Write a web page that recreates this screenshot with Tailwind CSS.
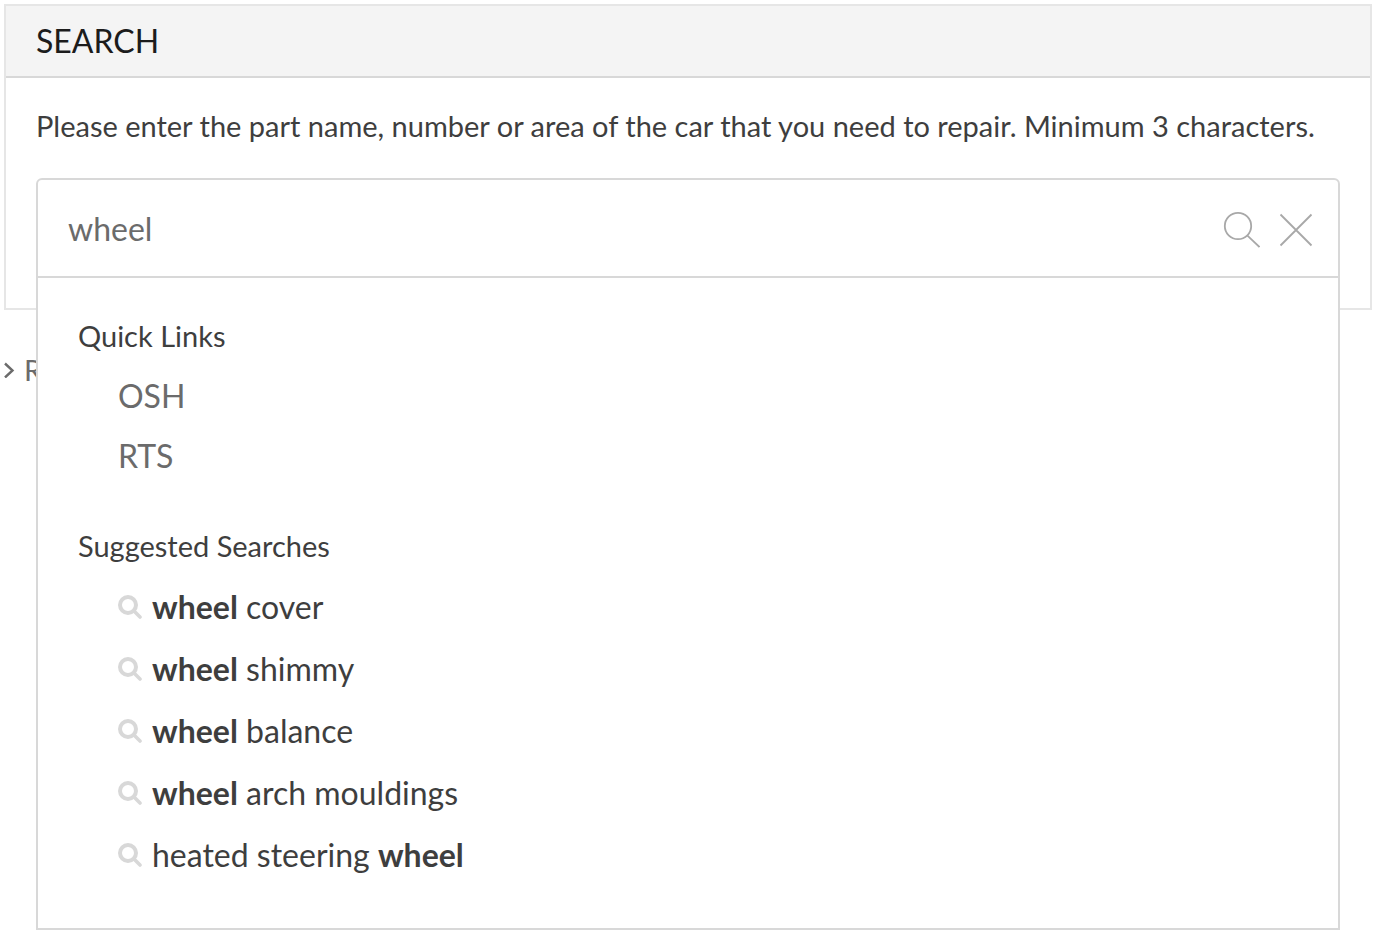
<!DOCTYPE html>
<html lang="en">
<head>
<meta charset="utf-8">
<meta name="viewport" content="width=device-width, initial-scale=1">
<title>Search</title>
<script src="https://cdn.jsdelivr.net/npm/@tailwindcss/browser@4"></script>
</head>
<body class="min-h-screen bg-white font-[Lato,sans-serif] text-[#3e3e3e]">
<svg class="hidden" aria-hidden="true">
  <symbol id="loupe" viewBox="0 0 24 24">
    <circle cx="10" cy="10" r="8" fill="none" stroke="currentColor" stroke-width="4"/>
    <path d="M16 16l6 6" fill="none" stroke="currentColor" stroke-width="3.6" stroke-linecap="round"/>
  </symbol>
</svg>
<main class="min-h-screen p-1 pr-[5px]">
  <section class="border-2 border-[#e6e6e6]">
    <h1 class="border-b-2 border-[#d8d8d8] bg-[#f4f4f4] px-[30px] text-[32px] leading-[70px] text-[#1c1c1c]">SEARCH</h1>
    <form class="p-[30px]">
      <label for="part" class="block text-[29px] leading-9">Please enter the part name, number or area of the car that you need to repair. Minimum 3 characters.</label>
      <div class="relative mt-[34px] rounded-t-md border-2 border-[#d8d8d8] bg-white">
        <div class="flex h-24 items-center pr-[22px] pl-[30px]">
          <input id="part" type="text" value="wheel" autocomplete="off" class="h-full min-w-0 flex-1 bg-transparent text-[32px] text-[#6b6b6b] outline-none">
          <button type="submit" aria-label="Search" class="text-[#a8a8a8]">
            <svg class="size-10" viewBox="0 0 40 40" fill="none" stroke="currentColor" stroke-width="1.8"><circle cx="18" cy="18" r="13.2"/><path d="M27.2 27.3L39.5 39"/></svg>
          </button>
          <button type="reset" aria-label="Clear" class="ml-4 text-[#a8a8a8]">
            <svg class="size-10" viewBox="0 0 40 40" fill="none" stroke="currentColor" stroke-width="1.8"><path d="M4.5 6.5l31 31M35.5 6.5l-31 31"/></svg>
          </button>
        </div>
        <div class="absolute top-full -right-0.5 -left-0.5 z-10 border-2 border-[#d8d8d8] bg-white px-10 pt-10 pb-[42px]">
          <h2 class="text-[29px] leading-9">Quick Links</h2>
          <ul class="mt-3 pl-10 text-[32px] leading-[60px] text-[#6b6b6b]">
            <li><a href="#osh">OSH</a></li>
            <li><a href="#rts">RTS</a></li>
          </ul>
          <h2 class="mt-[42px] text-[29px] leading-9">Suggested Searches</h2>
          <ul class="mt-3 pl-10 text-[32px] leading-[62px]">
            <li><a href="#cover" class="flex items-center gap-2.5"><svg class="size-6 text-[#d8d8d8]"><use href="#loupe"/></svg><span><b>wheel</b> cover</span></a></li>
            <li><a href="#shimmy" class="flex items-center gap-2.5"><svg class="size-6 text-[#d8d8d8]"><use href="#loupe"/></svg><span><b>wheel</b> shimmy</span></a></li>
            <li><a href="#balance" class="flex items-center gap-2.5"><svg class="size-6 text-[#d8d8d8]"><use href="#loupe"/></svg><span><b>wheel</b> balance</span></a></li>
            <li><a href="#arch" class="flex items-center gap-2.5"><svg class="size-6 text-[#d8d8d8]"><use href="#loupe"/></svg><span><b>wheel</b> arch mouldings</span></a></li>
            <li><a href="#heated" class="flex items-center gap-2.5"><svg class="size-6 text-[#d8d8d8]"><use href="#loupe"/></svg><span>heated steering <b>wheel</b></span></a></li>
          </ul>
        </div>
      </div>
    </form>
  </section>
  <a href="#r" class="mt-10 inline-flex items-center gap-2 text-[29px] leading-10 text-[#6b6b6b]">
    <svg class="h-4 w-3" viewBox="0 0 12 16" fill="none" stroke="currentColor" stroke-width="2.4"><path d="M1 1.5l7.5 7L1 15.5"/></svg>R
  </a>
</main>
</body>
</html>
